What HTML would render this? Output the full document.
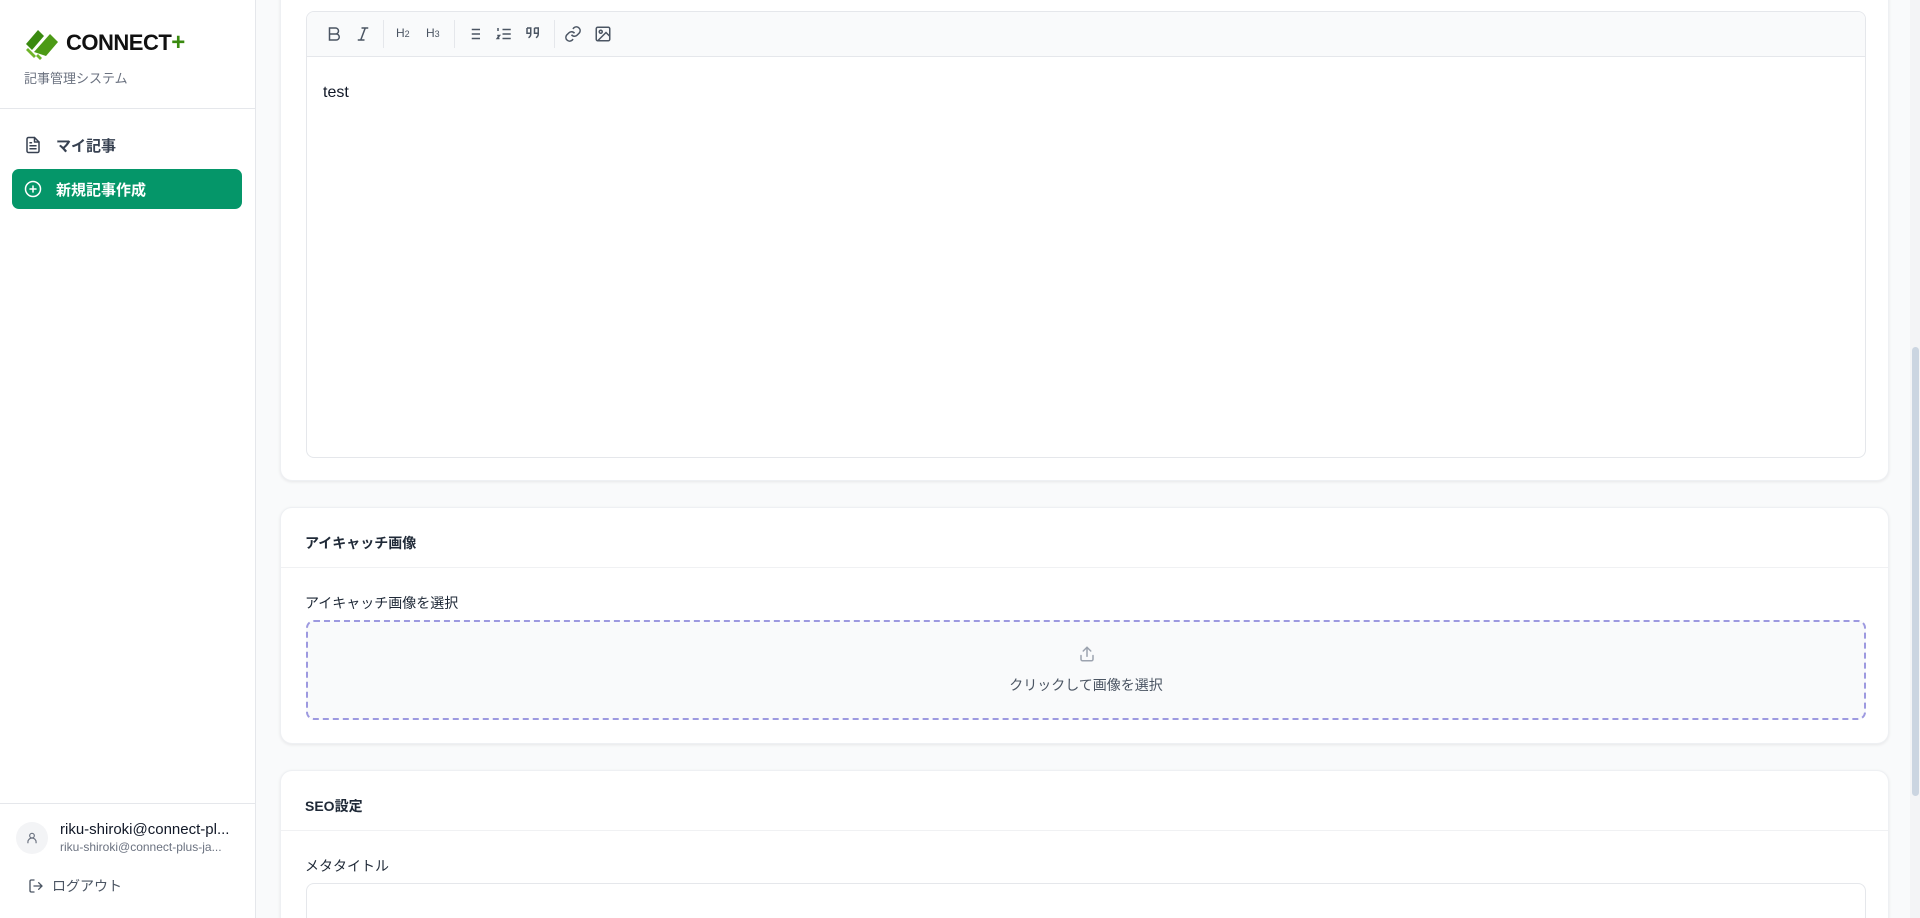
<!DOCTYPE html>
<html style="width:1920px;height:918px;overflow:hidden"><head><meta charset="utf-8"><style>
*{box-sizing:border-box;margin:0;padding:0}
body{width:1920px;height:918px;overflow:hidden;background:#f9fafb;font-family:"Liberation Sans","Noto Sans CJK JP",sans-serif;color:#111827;position:relative}
.side{position:absolute;left:0;top:0;width:256px;height:918px;background:#fff;border-right:1px solid #e5e7eb}
.logo{position:absolute;left:24px;top:26px;display:flex;align-items:center}
.logo span{font-weight:bold;font-size:22px;letter-spacing:-0.5px;margin-left:4px;color:#111}
.sub{position:absolute;left:24px;top:68px;font-size:13px;color:#6b7280}
.hr{position:absolute;left:0;width:255px;border-top:1px solid #e5e7eb}
.nav{position:absolute;left:12px;width:230px;height:40px;border-radius:7px;display:flex;align-items:center;padding-left:12px;font-size:15px;font-weight:bold;color:#374151}
.nav svg{margin-right:14px}
.act{background:#059669;color:#fff}
.main{position:absolute;left:257px;top:0;right:10px;height:918px;overflow:hidden}
.card{position:absolute;left:23px;width:1609px;background:#fff;border:1px solid #eef0f3;border-radius:12px;box-shadow:0 1px 3px rgba(0,0,0,.08)}
.ch{position:absolute;left:24px;font-size:14px;font-weight:bold;color:#1f2937}
.lbl{position:absolute;left:24px;font-size:14px;color:#1f2937}
.sb{position:absolute;right:0;top:0;width:10px;height:918px;background:#f3f4f6}
.thumb{position:absolute;right:1px;top:347px;width:7px;height:449px;background:#cbd5e1;border-radius:4px}
.tb svg{position:absolute;top:23px}
</style></head><body>
<div class="side">
 <div class="logo">
  <svg width="38" height="34" viewBox="0 0 38 34"><g fill="#3a8a10"><path d="M2 18 L14 4 L20 10 L8 24Z"/><path d="M10 26 L26 8 L34 16 L22 30Z" fill="#4c9a16"/><path d="M4 22 L12 30 L10 32 L2 24Z" fill="#6fb52a"/><path d="M14 28 L18 32 L16 34 L12 30Z" fill="#6fb52a"/></g></svg>
  <span>CONNECT</span><span style="color:#3a8a10;font-size:24px;margin-left:0">+</span>
 </div>
 <div class="sub">記事管理システム</div>
 <div class="hr" style="top:108px"></div>
 <div class="nav" style="top:125px">
  <svg width="18" height="18" viewBox="0 0 24 24" fill="none" stroke="#374151" stroke-width="2" stroke-linecap="round" stroke-linejoin="round"><path d="M14 2H6a2 2 0 0 0-2 2v16a2 2 0 0 0 2 2h12a2 2 0 0 0 2-2V8z"/><path d="M14 2v6h6M16 13H8M16 17H8M10 9H8"/></svg>マイ記事</div>
 <div class="nav act" style="top:169px">
  <svg width="18" height="18" viewBox="0 0 24 24" fill="none" stroke="#fff" stroke-width="2" stroke-linecap="round"><circle cx="12" cy="12" r="10"/><path d="M12 8v8M8 12h8"/></svg>新規記事作成</div>
 <div class="hr" style="top:803px"></div>
 <div style="position:absolute;left:16px;top:822px;width:32px;height:32px;border-radius:50%;background:#f3f4f6;display:flex;align-items:center;justify-content:center"><svg width="14" height="14" viewBox="0 0 24 24" fill="none" stroke="#6b7280" stroke-width="2"><circle cx="12" cy="8" r="4"/><path d="M5 21v-2a7 7 0 0 1 14 0v2"/></svg></div>
 <div style="position:absolute;left:60px;top:821px;font-size:15px;color:#111827">riku-shiroki@connect-pl...</div>
 <div style="position:absolute;left:60px;top:840px;font-size:12px;color:#6b7280">riku-shiroki@connect-plus-ja...</div>
 <div style="position:absolute;left:28px;top:876px;font-size:14px;color:#4b5563;display:flex;align-items:center"><svg width="16" height="16" viewBox="0 0 24 24" fill="none" stroke="#4b5563" stroke-width="2" stroke-linecap="round" style="margin-right:8px"><path d="M9 21H5a2 2 0 0 1-2-2V5a2 2 0 0 1 2-2h4M16 17l5-5-5-5M21 12H9"/></svg>ログアウト</div>
</div>
<div class="main">
 <div class="card" style="top:-20px;height:501px">
  <div style="position:absolute;left:25px;top:30px;width:1560px;height:447px;border:1px solid #e5e7eb;border-radius:8px;overflow:hidden">
   <div class="tb" style="height:45px;background:#f9fafb;border-bottom:1px solid #e5e7eb;position:relative;color:#4b5563">
    <svg style="left:18px;top:13px" width="18" height="18" viewBox="0 0 24 24" fill="none" stroke="#4b5563" stroke-width="2"><path d="M6 4h8a4 4 0 0 1 0 8H6zM6 12h9a4 4 0 0 1 0 8H6z"/></svg>
    <svg style="left:47px;top:13px" width="18" height="18" viewBox="0 0 24 24" fill="none" stroke="#4b5563" stroke-width="2"><path d="M19 4h-9M14 20H5M15 4L9 20"/></svg>
    <div style="position:absolute;left:76px;top:8px;width:1px;height:28px;background:#e5e7eb"></div>
    <div style="position:absolute;left:89px;top:14px;font-size:12px">H<small style="font-size:9px">2</small></div>
    <div style="position:absolute;left:119px;top:14px;font-size:12px">H<small style="font-size:9px">3</small></div>
    <div style="position:absolute;left:147px;top:8px;width:1px;height:28px;background:#e5e7eb"></div>
    <svg style="left:158px;top:13px" width="18" height="18" viewBox="0 0 24 24" fill="none" stroke="#4b5563" stroke-width="2"><path d="M9 6h11M9 12h11M9 18h11M4 6h.01M4 12h.01M4 18h.01"/></svg>
    <svg style="left:188px;top:13px" width="18" height="18" viewBox="0 0 24 24" fill="none" stroke="#4b5563" stroke-width="2"><path d="M10 6h11M10 12h11M10 18h11M4 4v4M3 14h3l-3 4h3"/></svg>
    <svg style="left:217px;top:13px" width="18" height="18" viewBox="0 0 24 24" fill="none" stroke="#4b5563" stroke-width="2"><path d="M4 4h5v8a6 6 0 0 1-3 5M4 4v7h5M14 4h5v8a6 6 0 0 1-3 5M14 4v7h5"/></svg>
    <div style="position:absolute;left:247px;top:8px;width:1px;height:28px;background:#e5e7eb"></div>
    <svg style="left:257px;top:13px" width="18" height="18" viewBox="0 0 24 24" fill="none" stroke="#4b5563" stroke-width="2"><path d="M10 13a5 5 0 0 0 7.5.5l3-3a5 5 0 0 0-7-7l-1.7 1.7M14 11a5 5 0 0 0-7.5-.5l-3 3a5 5 0 0 0 7 7l1.7-1.7"/></svg>
    <svg style="left:287px;top:13px" width="18" height="18" viewBox="0 0 24 24" fill="none" stroke="#4b5563" stroke-width="2"><rect x="3" y="3" width="18" height="18" rx="2"/><circle cx="9" cy="9" r="2"/><path d="M21 15l-5-5L5 21"/></svg>
   </div>
   <div style="position:absolute;left:16px;top:72px;font-size:16px;color:#111827">test</div>
  </div>
 </div>
 <div class="card" style="top:507px;height:237px">
  <div class="ch" style="top:25px">アイキャッチ画像</div>
  <div style="position:absolute;left:0;right:0;top:59px;border-top:1px solid #f0f1f3"></div>
  <div class="lbl" style="top:85px">アイキャッチ画像を選択</div>
  <div style="position:absolute;left:25px;top:112px;width:1560px;height:100px;border:2px dashed #9d99e0;border-radius:8px;background:#f9fafb">
   <svg style="position:absolute;left:770px;top:23px" width="18" height="18" viewBox="0 0 24 24" fill="none" stroke="#9ca3af" stroke-width="2" stroke-linecap="round"><path d="M4 14v5a2 2 0 0 0 2 2h12a2 2 0 0 0 2-2v-5M12 3v12M7 8l5-5 5 5"/></svg>
   <div style="position:absolute;left:0;right:0;top:53px;text-align:center;font-size:14px;color:#4b5563">クリックして画像を選択</div>
  </div>
 </div>
 <div class="card" style="top:770px;height:148px;border-bottom:none;border-radius:12px 12px 0 0">
  <div class="ch" style="top:25px">SEO設定</div>
  <div style="position:absolute;left:0;right:0;top:59px;border-top:1px solid #f0f1f3"></div>
  <div class="lbl" style="top:85px">メタタイトル</div>
  <div style="position:absolute;left:25px;top:112px;width:1560px;height:36px;border:1px solid #e5e7eb;border-bottom:none;border-radius:8px 8px 0 0"></div>
 </div>
</div>
<div class="sb"><div class="thumb"></div></div>
</body></html>
